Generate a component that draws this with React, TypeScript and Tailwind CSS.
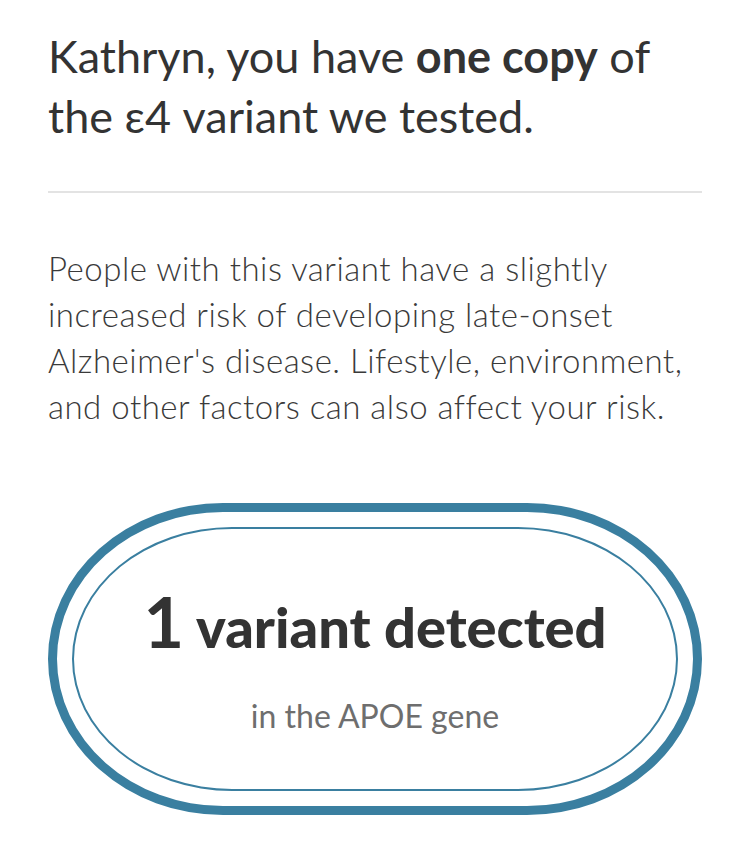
import React from 'react'

const font = { fontFamily: 'Lato, "Noto Sans", sans-serif' }

const App = () => {
  return (
    <div className="min-h-[862px] w-[750px] bg-white pl-12 pt-[26px] text-[#333333]" style={font}>
      <h1 className="w-[654px] text-[45px] leading-[60px] font-normal">
        Kathryn, you have <span className="font-bold">one copy</span> of the ε4 variant we tested.
      </h1>

      <div className="mt-[45px] h-[2px] w-[654px] bg-[#e3e3e3]" />

      <p className="mt-[52px] whitespace-nowrap text-[33px] leading-[46px] font-light tracking-[0.5px] text-[#3a3a3a]">
        People with this variant have a slightly
        <br />
        increased risk of developing late-onset
        <br />
        Alzheimer's disease. Lifestyle, environment,
        <br />
        and other factors can also affect your risk.
      </p>

      <div className="mt-[74px] w-[654px] rounded-[175px/156px] border-[9px] border-[#3a7fa0] p-[15px]">
        <div className="flex h-[264px] flex-col items-center justify-center rounded-[160px/132px] border-2 border-[#3a7fa0]">
          <div className="flex items-baseline gap-3 text-[#333333]">
            <span className="text-[70px] leading-none font-bold">1</span>
            <span className="text-[56px] leading-none font-black">variant detected</span>
          </div>
          <div className="mt-[44px] text-[32px] leading-none text-[#6e6e6e]">in the APOE gene</div>
        </div>
      </div>
    </div>
  )
}

export default App
